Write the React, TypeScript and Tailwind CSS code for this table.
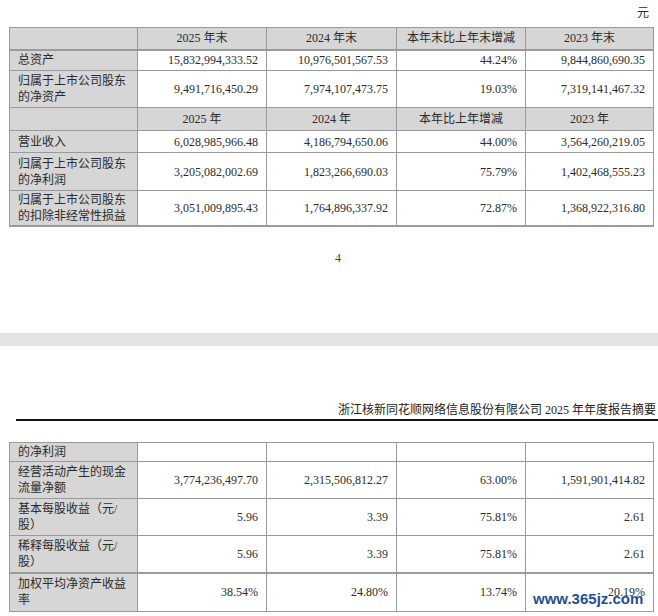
import React from "react";

const font = { fontFamily: '"Liberation Serif", "Noto Sans CJK SC", serif' };

type Row = { label: string[]; vals: string[]; h: number; thickTop?: boolean; header?: boolean };

const upper: Row[] = [
  { label: [""], vals: ["2025 年末", "2024 年末", "本年末比上年末增减", "2023 年末"], h: 22, header: true },
  { label: ["总资产"], vals: ["15,832,994,333.52", "10,976,501,567.53", "44.24%", "9,844,860,690.35"], h: 21, thickTop: true },
  { label: ["归属于上市公司股东", "的净资产"], vals: ["9,491,716,450.29", "7,974,107,473.75", "19.03%", "7,319,141,467.32"], h: 37 },
  { label: [""], vals: ["2025 年", "2024 年", "本年比上年增减", "2023 年"], h: 23, header: true },
  { label: ["营业收入"], vals: ["6,028,985,966.48", "4,186,794,650.06", "44.00%", "3,564,260,219.05"], h: 22 },
  { label: ["归属于上市公司股东", "的净利润"], vals: ["3,205,082,002.69", "1,823,266,690.03", "75.79%", "1,402,468,555.23"], h: 38 },
  { label: ["归属于上市公司股东", "的扣除非经常性损益"], vals: ["3,051,009,895.43", "1,764,896,337.92", "72.87%", "1,368,922,316.80"], h: 35 },
];

const lower: Row[] = [
  { label: ["的净利润"], vals: ["", "", "", ""], h: 19 },
  { label: ["经营活动产生的现金", "流量净额"], vals: ["3,774,236,497.70", "2,315,506,812.27", "63.00%", "1,591,901,414.82"], h: 37 },
  { label: ["基本每股收益（元/", "股）"], vals: ["5.96", "3.39", "75.81%", "2.61"], h: 37 },
  { label: ["稀释每股收益（元/", "股）"], vals: ["5.96", "3.39", "75.81%", "2.61"], h: 38 },
  { label: ["加权平均净资产收益", "率"], vals: ["38.54%", "24.80%", "13.74%", "20.19%"], h: 38, thickTop: true },
];

function DataTable({ rows, bottomThick }: { rows: Row[]; bottomThick?: boolean }) {
  return (
    <table
      className={`ml-[9px] w-[644px] table-fixed border-collapse text-[12px] leading-[16px] text-[#2b2b2b] ${bottomThick ? "border-b-2" : ""} border-[#9a9a9a]`}
      style={font}
    >
      <colgroup>
        <col className="w-[128px]" />
        <col className="w-[129px]" />
        <col className="w-[130px]" />
        <col className="w-[129px]" />
        <col className="w-[128px]" />
      </colgroup>
      <tbody>
        {rows.map((r, i) => (
          <tr key={i} style={{ height: r.h }}>
            <td
              className={`whitespace-nowrap border border-[#9a9a9a] bg-[#d6d6d6] pl-[8px] align-middle ${r.thickTop ? "border-t-2" : ""}`}
            >
              {r.label.map((l, j) => (
                <div key={j}>{l}</div>
              ))}
            </td>
            {r.vals.map((v, j) => (
              <td
                key={j}
                className={`whitespace-nowrap border border-[#9a9a9a] align-middle ${r.header ? "bg-[#d6d6d6] text-center" : "bg-white pr-[8px] text-right"} ${r.thickTop ? "border-t-2" : ""}`}
              >
                {v}
              </td>
            ))}
          </tr>
        ))}
      </tbody>
    </table>
  );
}

export default function App() {
  return (
    <div className="relative h-[616px] w-[658px] overflow-hidden bg-white" style={font}>
      <div className="flex h-[27px] justify-end pr-[9px] pt-[5px] text-[12px] leading-[16px] text-[#2b2b2b]">元</div>
      <DataTable rows={upper} bottomThick />
      <div className="mt-[23px] text-center text-[12px] leading-[16px] text-[#444]">
        <span className="ml-[18px]">4</span>
      </div>
      <div className="mt-[67px] h-[13px] w-full bg-[#e3e3e3]" />
      <div className="mt-[56px] pr-[2px] text-right text-[12px] leading-[16px] text-[#222]">
        浙江核新同花顺网络信息股份有限公司 2025 年年度报告摘要
      </div>
      <div className="ml-[16px] mt-[1px] h-[2px] bg-[#111]" />
      <div className="mt-[21px]">
        <DataTable rows={lower} />
      </div>
      <div
        className="absolute left-[533px] top-[591px] text-[15px] font-bold leading-[16px] text-[#1f4f8f]"
        style={{ fontFamily: '"Liberation Sans", sans-serif' }}
      >
        www.365jz.com
      </div>
    </div>
  );
}
